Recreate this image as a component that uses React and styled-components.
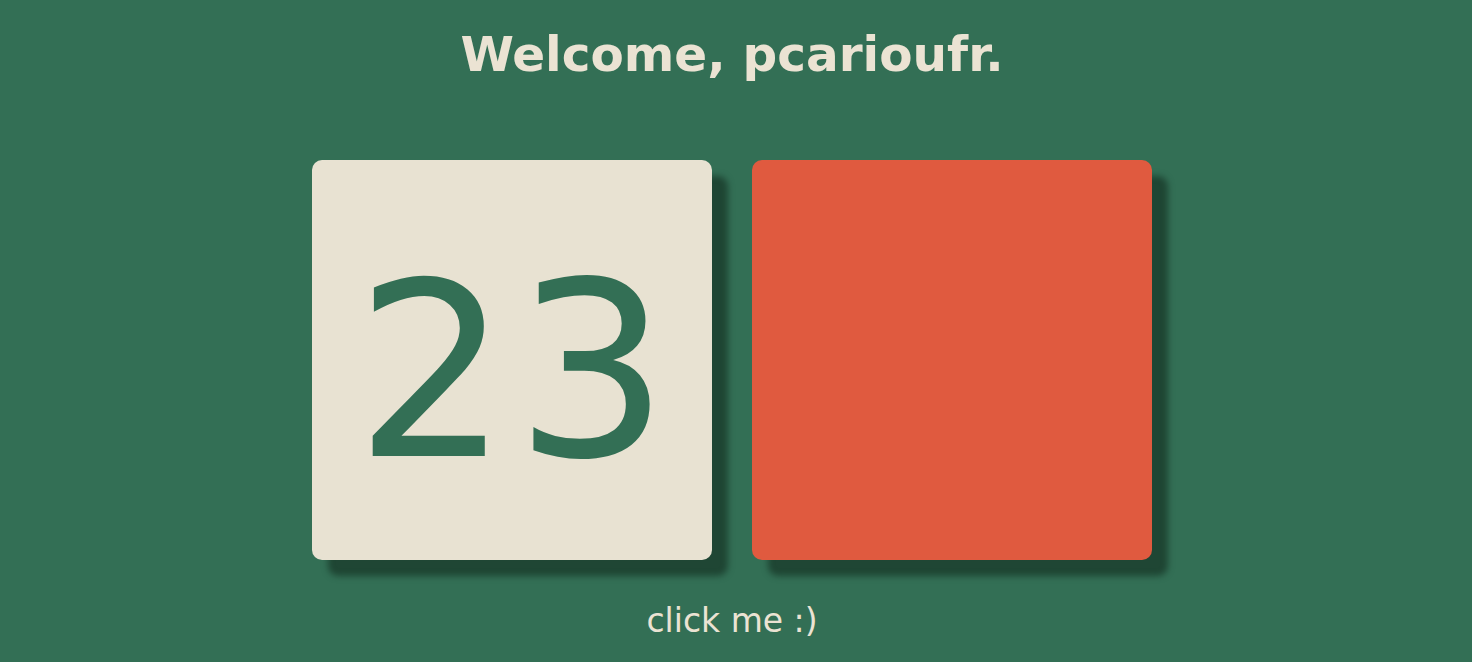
import React from "react"
import styled, { createGlobalStyle } from "styled-components"

const GlobalStyle = createGlobalStyle`
  html, body {
    margin: 0;
    padding: 0;
    background: #336f55;
    font-family: Verdana, "DejaVu Sans", sans-serif;
  }
`

function App() {
  return (
    <Wrapper>
      <GlobalStyle />
      <Title>Welcome, pcarioufr.</Title>
      <CardRow>
        <Card>
          <Number>23</Number>
        </Card>
        <Card $red />
      </CardRow>
      <Hint>click me :)</Hint>
    </Wrapper>
  )
}

export default App

const Wrapper = styled.div`
  display: flex;
  flex-direction: column;
  align-items: center;
  height: 662px;
  padding-right: 8px;
  color: #ebe3d3;
`

const Title = styled.h1`
  margin: 23px 0 0;
  font-size: 48.5px;
  font-weight: bold;
  line-height: 62px;
`

const CardRow = styled.div`
  display: flex;
  gap: 40px;
  margin-top: 75px;
`

const Card = styled.div`
  width: 400px;
  height: 400px;
  border-radius: 10px;
  background: ${(p) => (p.$red ? "#e05a3f" : "#e8e2d2")};
  box-shadow: 16px 16px 6px #1f4634;
  display: flex;
  align-items: center;
  justify-content: center;
`

const Number = styled.span`
  font-size: 242px;
  color: #336f55;
  line-height: 1;
  letter-spacing: 6px;
  padding: 24px 0 0 6px;
`

const Hint = styled.div`
  margin-top: 41px;
  font-size: 33px;
`
